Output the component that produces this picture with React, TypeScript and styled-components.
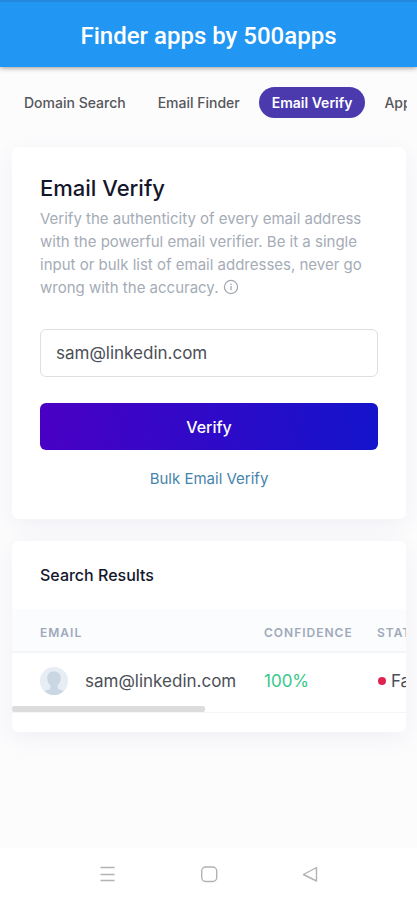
import React, { useState } from "react";
import styled, { createGlobalStyle } from "styled-components";

const GlobalStyle = createGlobalStyle`
  *, *::before, *::after { box-sizing: border-box; }
  body {
    margin: 0;
    background: #fcfcfd;
    font-family: Inter, "Liberation Sans", sans-serif;
    color: #44484f;
  }
  button, input { font: inherit; }
`;

const Page = styled.div`
  display: flex;
  flex-direction: column;
  min-height: 100vh;
`;

const AppBar = styled.header`
  display: flex;
  align-items: center;
  justify-content: center;
  height: 67px;
  padding-top: 2px;
  border-top: 2px solid #2388dc;
  background: #2196f3;
  box-shadow: 0 1px 5px rgba(0, 0, 0, 0.4);
`;

const AppTitle = styled.h1`
  margin: 0;
  font: 500 24px/28px Roboto, sans-serif;
  color: #fff;
`;

const Tabs = styled.nav`
  display: flex;
  align-items: center;
  gap: 6px;
  margin: 20px 10px 0 11px;
  overflow: hidden;
`;

const Tab = styled.button<{ $active?: boolean }>`
  flex: none;
  height: 31px;
  padding: 0 13px 1px;
  border: 0;
  border-radius: 16px;
  background: ${(p) => (p.$active ? "#4a3aae" : "transparent")};
  color: ${(p) => (p.$active ? "#fff" : "#55565a")};
  font-size: 14px;
  font-weight: ${(p) => (p.$active ? 600 : 500)};
  white-space: nowrap;
`;

const Content = styled.main`
  flex: 1;
  display: flex;
  flex-direction: column;
  gap: 22px;
  padding: 29px 11px 40px 12px;
`;

const Card = styled.section`
  border-radius: 7px;
  background: #fff;
  box-shadow: 0 6px 24px rgba(50, 50, 120, 0.06);
  overflow: hidden;
`;

const VerifyForm = styled.form`
  display: flex;
  flex-direction: column;
  padding: 27px 28px 30px;
`;

const FormTitle = styled.h2`
  margin: 0 0 5px;
  font-size: 22px;
  line-height: 28px;
  font-weight: 500;
  color: #14172b;
`;

const Description = styled.p`
  margin: 0 0 30px;
  font-size: 15px;
  line-height: 23px;
  color: #a5acb6;
`;

const InfoIcon = styled.svg`
  width: 16px;
  height: 16px;
  vertical-align: -2px;
`;

const EmailInput = styled.input`
  width: 100%;
  height: 48px;
  padding: 0 15px;
  border: 1px solid #dddfe3;
  border-radius: 6px;
  background: #fff;
  color: #4b4f57;
  font-size: 17px;
  outline: none;
`;

const SubmitButton = styled.button`
  height: 47px;
  margin-top: 26px;
  border: 0;
  border-radius: 6px;
  background: linear-gradient(100deg, #4a00c4, #1414cc);
  color: #fff;
  font-size: 16px;
  font-weight: 500;
`;

const BulkLink = styled.a`
  align-self: center;
  margin-top: 19px;
  font-size: 15px;
  line-height: 20px;
  color: #4584ab;
  text-decoration: none;
`;

const ResultsTitle = styled.h2`
  margin: 0;
  padding: 23px 28px;
  font-size: 16px;
  line-height: 22px;
  font-weight: 500;
  color: #14172b;
`;

const TableScroller = styled.div`
  overflow-x: auto;
  scrollbar-width: none;
`;

const ResultsTable = styled.table`
  width: 796px;
  border-collapse: collapse;
  text-align: left;
`;

const HeadCell = styled.th<{ $width?: number }>`
  width: ${(p) => (p.$width ? `${p.$width}px` : "auto")};
  height: 43px;
  padding: 4px 0 0;
  border-bottom: 2px solid #f3f5f8;
  background: #fafcfe;
  color: #a0a9ba;
  font-size: 12px;
  font-weight: 600;
  letter-spacing: 1px;
  text-transform: uppercase;

  &:first-child { padding-left: 28px; }
`;

const Cell = styled.td<{ $tone?: string }>`
  height: 54px;
  padding: 3px 0 0;
  color: ${(p) => p.$tone ?? "#4b4f57"};
  font-size: 17px;
  white-space: nowrap;

  &:first-child { padding-left: 28px; }
`;

const Person = styled.div`
  display: flex;
  align-items: center;
  gap: 17px;
`;

const Avatar = styled.svg`
  width: 28px;
  height: 28px;
`;

const Status = styled.div`
  display: flex;
  align-items: center;
  gap: 5px;
`;

const Dot = styled.span`
  width: 8px;
  height: 8px;
  margin-left: 1px;
  border-radius: 50%;
  background: #e0234e;
`;

const ScrollTrack = styled.div`
  height: 7px;
  margin-bottom: 19px;
  border-bottom: 1px solid #f3f4f6;
`;

const ScrollThumb = styled.div`
  width: 49%;
  height: 6px;
  border-radius: 2px;
  background: #dcdcdc;
`;

const SystemBar = styled.footer`
  display: flex;
  justify-content: center;
  align-items: center;
  gap: 77px;
  height: 52px;
  background: #fff;
`;

const SystemButton = styled.button`
  display: flex;
  width: 24px;
  height: 24px;
  padding: 0;
  border: 0;
  background: none;
`;

const Glyph = styled.svg`
  width: 24px;
  height: 24px;
  fill: none;
  stroke: #b2b2b2;
  stroke-width: 1.4;
  stroke-linejoin: round;
`;

const tabNames = ["Domain Search", "Email Finder", "Email Verify", "App Finder"];

export default function App() {
  const [active, setActive] = useState("Email Verify");
  const [email, setEmail] = useState("sam@linkedin.com");

  return (
    <Page>
      <GlobalStyle />
      <AppBar>
        <AppTitle>Finder apps by 500apps</AppTitle>
      </AppBar>
      <Tabs>
        {tabNames.map((name) => (
          <Tab key={name} $active={name === active} onClick={() => setActive(name)}>
            {name}
          </Tab>
        ))}
      </Tabs>
      <Content>
        <Card>
          <VerifyForm onSubmit={(e) => e.preventDefault()}>
            <FormTitle>Email Verify</FormTitle>
            <Description>
              Verify the authenticity of every email address with the powerful email verifier. Be it a
              single input or bulk list of email addresses, never go wrong with the accuracy.{" "}
              <InfoIcon viewBox="0 0 16 16" fill="none" stroke="#a0a7b1" aria-hidden="true">
                <circle cx="8" cy="8" r="6.6" strokeWidth="1.2" />
                <path d="M8 7v4.2M8 4.6v1.3" strokeWidth="1.3" />
              </InfoIcon>
            </Description>
            <EmailInput
              type="email"
              aria-label="Email address"
              value={email}
              onChange={(e) => setEmail(e.target.value)}
            />
            <SubmitButton type="submit">Verify</SubmitButton>
            <BulkLink href="#bulk">Bulk Email Verify</BulkLink>
          </VerifyForm>
        </Card>
        <Card>
          <ResultsTitle>Search Results</ResultsTitle>
          <TableScroller>
            <ResultsTable>
              <thead>
                <tr>
                  <HeadCell $width={252}>Email</HeadCell>
                  <HeadCell $width={113}>Confidence</HeadCell>
                  <HeadCell>Status</HeadCell>
                </tr>
              </thead>
              <tbody>
                <tr>
                  <Cell>
                    <Person>
                      <Avatar viewBox="0 0 28 28" aria-hidden="true">
                        <circle cx="14" cy="14" r="14" fill="#e6edf5" />
                        <path
                          d="M14 4.500c-4.600 0-7 2.800-6.800 6.700.1 3.200 1.400 5.600 3.200 7.100v2.500c-.2 1.800-3.300 2.300-6.200 3.300a14 14 0 0 0 19.600 0c-2.900-1-6-1.500-6.200-3.300v-2.500c1.800-1.500 3.100-3.900 3.200-7.100.2-3.900-2.200-6.700-6.800-6.700Z"
                          fill="#cad6e2"
                        />
                      </Avatar>
                      sam@linkedin.com
                    </Person>
                  </Cell>
                  <Cell $tone="#36c78c">100%</Cell>
                  <Cell>
                    <Status>
                      <Dot />
                      Failed
                    </Status>
                  </Cell>
                </tr>
              </tbody>
            </ResultsTable>
          </TableScroller>
          <ScrollTrack>
            <ScrollThumb />
          </ScrollTrack>
        </Card>
      </Content>
      <SystemBar>
        <SystemButton aria-label="Recent apps">
          <Glyph viewBox="0 0 24 24">
            <path d="M4.500 5.500h14M4.500 12.500h14M4.500 18.500h14" />
          </Glyph>
        </SystemButton>
        <SystemButton aria-label="Home">
          <Glyph viewBox="0 0 24 24">
            <rect x="4.700" y="5" width="15" height="14.500" rx="4" />
          </Glyph>
        </SystemButton>
        <SystemButton aria-label="Back">
          <Glyph viewBox="0 0 24 24">
            <path d="M18.500 5.500v13.500L5.500 12.500Z" />
          </Glyph>
        </SystemButton>
      </SystemBar>
    </Page>
  );
}
